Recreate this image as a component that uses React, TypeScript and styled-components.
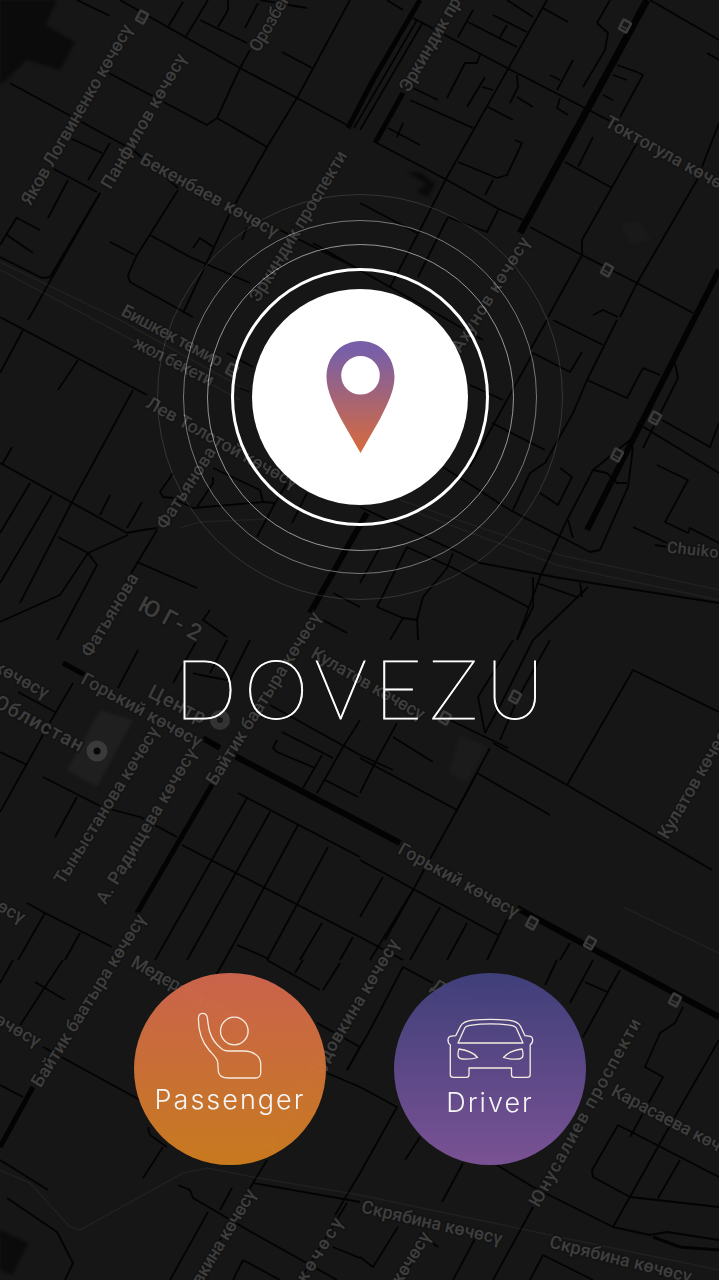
import React from "react";
import styled, { createGlobalStyle } from "styled-components";

const GlobalStyle = createGlobalStyle`
  html, body { margin: 0; padding: 0; background: #161616; }
  * { box-sizing: border-box; }
`;

const Page = styled.main`
  display: grid;
  width: 719px;
  height: 1280px;
  overflow: hidden;
  background: #161616;
`;

const MapLayer = styled.svg`
  grid-area: 1 / 1;
  display: block;
  width: 719px;
  height: 1280px;
`;

const Road = styled.polyline<{ $w: number }>`
  fill: none;
  stroke: #030303;
  stroke-width: ${(p) => p.$w}px;
  stroke-linejoin: round;
`;

const FaintRoad = styled.polyline`
  fill: none;
  stroke: rgba(255, 255, 255, 0.045);
  stroke-width: 1.5px;
`;

const Block = styled.polygon<{ $c: string }>`
  fill: ${(p) => p.$c};
  filter: blur(1.5px);
`;

const Label = styled.text<{ $size: number }>`
  font-family: Roboto, "Liberation Sans", sans-serif;
  font-weight: 500;
  font-size: ${(p) => p.$size}px;
  fill: #3e3e3e;
  stroke: #131313;
  stroke-width: 3px;
  paint-order: stroke;
  dominant-baseline: central;
`;

const Content = styled.div`
  grid-area: 1 / 1;
  display: flex;
  flex-direction: column;
  align-items: center;
  padding: 194px 0 0 1px;
`;

const Ring = styled.div<{ $size: number; $line: string; $width: number }>`
  display: flex;
  align-items: center;
  justify-content: center;
  flex: none;
  width: ${(p) => p.$size}px;
  height: ${(p) => p.$size}px;
  border-radius: 50%;
  border: ${(p) => p.$width}px solid ${(p) => p.$line};
`;

const Disc = styled.div`
  display: flex;
  align-items: flex-start;
  justify-content: center;
  flex: none;
  width: 216px;
  height: 216px;
  padding-top: 52px;
  border-radius: 50%;
  background: #fff;
`;

const Title = styled.h1`
  margin: 45px 0 0 6px;
  font-family: Lato, "Liberation Sans", sans-serif;
  font-weight: 100;
  font-size: 82px;
  line-height: 84px;
  letter-spacing: 7.3px;
  -webkit-text-stroke: 0.9px #fff;
  color: #fff;
`;

const Actions = styled.div`
  display: flex;
  gap: 68px;
  margin-top: 244px;
`;

const RoleButton = styled.button<{ $from: string; $to: string; $top: number }>`
  display: flex;
  flex-direction: column;
  align-items: center;
  width: 192px;
  height: 192px;
  padding: ${(p) => p.$top}px 0 0;
  border: 0;
  border-radius: 50%;
  opacity: 0.96;
  background: linear-gradient(180deg, ${(p) => p.$from}, ${(p) => p.$to});
`;

const RoleIcon = styled.svg`
  display: block;
  flex: none;
  overflow: visible;
  fill: none;
  stroke: #fff6ea;
  stroke-width: 1.3px;
  stroke-linejoin: round;
`;

const RoleName = styled.span<{ $gap: number }>`
  margin-top: ${(p) => p.$gap}px;
  font-family: Inter, "Liberation Sans", sans-serif;
  font-weight: 300;
  font-size: 27px;
  line-height: 32px;
  letter-spacing: 2px;
  color: #fff;
`;

const thin: string[] = [
  "10,83 133,150 178,188", "250,215 360,270 483,340", "637,423 719,473",
  "77,0 110,16", "120,0 187,38 240,68 297,98 347,125", "107,72 207,125 217,118 267,147",
  "217,118 240,68 250,50", "200,20 247,43", "185,38 208,0", "168,27 183,2", "218,27 228,10 228,0",
  "245,28 258,3", "260,0 307,8", "282,52 312,68", "350,0 297,98 267,147 230,213 183,313",
  "110,143 88,180", "68,137 102,153", "52,168 97,192", "68,180 48,218", "17,218 40,230",
  "7,235 33,253", "17,217 0,245", "0,257 42,278 50,277 100,193", "100,193 28,320",
  "178,190 137,255 128,275 130,282 193,317", "110,242 135,255", "150,235 190,257 250,283",
  "193,248 200,238 213,247", "242,240 247,227", "313,243 360,270",
  "387,0 403,10", "413,18 507,68 583,107 633,133", "507,0 533,17", "543,8 568,22",
  "547,0 447,177 420,230 390,287", "473,10 458,37", "468,22 517,47", "493,15 527,32",
  "507,25 500,37", "465,63 447,98", "465,63 477,63 480,55", "485,77 467,107", "482,87 493,90",
  "517,75 518,87 510,103", "517,97 533,107", "488,107 513,120", "573,60 557,90", "550,75 560,80",
  "560,98 557,108 568,115", "610,0 597,23 608,33 605,50 583,87", "617,65 637,72 643,75 620,117",
  "613,75 627,80", "603,95 613,100", "650,0 719,40", "707,53 719,60", "410,100 473,128",
  "413,88 438,100", "388,128 420,145", "403,123 397,137", "377,143 447,180 497,208 523,220",
  "530,227 582,255 637,283 693,313", "593,137 578,167", "565,162 612,188",
  "637,143 582,240 582,255 548,317", "719,123 697,180 637,283 620,317",
  "458,162 497,178 507,175 522,143 515,140", "493,180 485,195", "448,217 487,232 498,210",
  "448,217 418,277", "593,315 603,310 618,317", "360,203 417,233",
  "423,22 360,130", "417,20 354,128", "0,317 147,395", "23,330 0,373", "78,360 58,390",
  "133,390 72,502", "0,463 127,533 143,530 157,528", "12,447 2,465", "30,483 0,533",
  "52,495 0,583", "72,502 20,603", "110,495 100,515", "142,502 127,528", "58,537 88,553",
  "128,535 88,553 60,595 0,622", "88,553 97,565 57,640", "157,530 133,570 112,607",
  "137,562 197,588", "210,610 203,620 227,637", "173,473 160,492 163,497 173,498 193,508",
  "193,508 263,502 260,490 213,468", "213,477 213,483 197,507", "263,502 275,503 257,537",
  "307,493 292,523", "287,483 275,503", "333,593 360,607", "323,620 347,633", "227,353 253,367",
  "240,388 250,392", "553,320 603,345", "547,320 530,350", "617,320 587,380 573,413 545,463 530,473 513,510",
  "582,352 570,372 533,353 470,467", "587,380 627,398 643,368 660,375", "470,385 503,400",
  "492,423 545,450", "540,493 558,505 572,477 560,468", "675,363 678,378 643,448",
  "630,440 593,470 567,520 540,577 517,640", "633,447 628,487 600,550 590,552 510,510 443,467",
  "593,470 607,473 617,483 627,483", "568,520 573,538",
  "657,465 688,480 665,522 688,533 690,528 719,543", "633,527 667,543", "655,545 667,547",
  "662,420 710,447 719,423", "360,507 460,553 480,563 560,578 719,603",
  "407,547 453,568 530,608", "453,553 447,568 423,597 417,620 403,618 390,640",
  "377,607 403,618", "377,607 407,547", "417,617 418,640", "380,547 360,583",
  "533,577 533,607 517,640", "588,587 533,640", "537,583 577,597", "580,583 582,597",
  "18,692 55,712", "138,650 118,688", "73,683 53,717 0,812", "0,752 27,765",
  "43,777 102,807 140,817 177,837", "77,797 55,837", "182,845 360,937 403,960",
  "27,903 45,913 112,947", "45,913 18,960", "80,933 65,960", "238,793 360,857",
  "247,798 155,960", "270,812 187,960", "298,825 233,945 205,995", "328,847 267,960", "322,923 300,960",
  "353,937 340,960", "237,945 267,958", "277,740 273,748 277,752 315,768", "282,732 333,758",
  "270,705 360,755 393,770", "322,755 303,788", "343,747 317,793", "325,780 358,797",
  "360,720 343,747", "193,673 200,675 227,680", "197,640 173,683", "227,640 210,673",
  "250,640 230,680", "360,758 457,810 477,773 550,815", "393,737 433,762", "397,723 373,767 360,793",
  "490,748 457,810 413,890 385,940", "450,720 508,748", "493,743 567,785 712,870",
  "567,785 633,670 719,712", "478,697 485,733", "478,697 513,640", "533,640 503,700 485,733",
  "550,640 517,700 500,740", "360,860 498,935", "383,877 360,917", "413,890 370,960",
  "440,907 410,960", "467,923 447,960", "508,917 487,960", "570,943 560,960",
  "13,960 0,983", "35,982 65,1000", "63,960 43,990 17,1030", "0,1085 23,1097", "43,1047 140,1100",
  "148,1127 150,1135 167,1147", "163,1147 143,1178", "0,1160 48,1190",
  "7,1198 57,1232 73,1263 65,1280", "178,1185 190,1190 193,1198 253,1233 337,1280",
  "208,1212 170,1280", "232,1188 220,1210", "253,1183 360,1202", "267,1160 253,1183 220,1240",
  "347,1203 300,1280", "333,1247 360,1258", "243,1260 233,1280", "243,1260 280,1280",
  "267,960 320,990", "295,973 303,960", "323,990 340,963", "317,1023 360,1047", "327,1073 360,1087",
  "347,1070 360,1047", "403,967 433,983", "403,967 370,1030 347,1070", "360,1087 397,1107 360,1173 335,1215",
  "420,1137 405,1160", "463,1163 442,1202", "497,1165 533,1187 613,1227 650,1235",
  "593,960 570,1003", "620,970 583,1037", "585,982 607,992", "557,960 545,985",
  "683,1007 675,1023 660,1033 645,1067 663,1077 630,1137", "719,1040 677,1113 613,1227",
  "618,1125 592,1170 593,1177 630,1197 719,1207", "618,1125 719,1177", "680,1160 658,1198",
  "650,1235 667,1232 719,1240", "533,1207 493,1280", "420,1233 438,1247", "427,1233 403,1280",
  "478,1233 453,1280", "543,1255 530,1280", "543,1255 593,1280", "360,1257 373,1267 398,1227",
];

const thick: [string, number][] = [
  ["420,0 373,80 348,128", 5], ["403,93 375,143", 5], ["367,513 310,613", 6],
  ["213,783 137,913", 5], ["33,1087 0,1147", 5], ["647,0 520,233", 7], ["719,270 587,530", 6],
  ["63,663 85,675", 5], ["203,738 220,748", 6], ["233,755 400,843", 6],
  ["517,908 719,1017", 6], ["653,1237 680,1247 719,1250", 3],
];

const faint: string[] = [
  "0,262 120,320 250,392", "0,270 110,328 240,400", "400,500 560,555 719,590", "410,510 560,566 719,600",
  "180,528 200,522 265,519", "0,1170 30,1183 70,1227 80,1230 183,1173 207,1168 253,1177 360,1195 550,1235 719,1270",
  "623,907 719,953",
];

const blocks: [string, string][] = [
  ["0,0 57,0 45,25 75,42 60,70 27,60 0,85", "#0b0b0b"],
  ["100,710 133,720 97,787 67,770", "#1f1f1f"],
  ["460,735 487,747 467,783 448,773", "#1b1b1b"],
  ["620,222 640,222 652,240 630,245", "#191919"],
  ["0,1230 28,1243 12,1275 0,1270", "#0b0b0b"],
  ["407,172 420,172 435,184 428,197 417,192 426,184", "#0a0a0a"],
];

type Street = { t: string; x: number; y: number; a: number; l: number; s?: number };
const streets: Street[] = [
  { t: "Яков Логвиненко көчөсү", x: 25, y: 203, a: -60, l: 205 },
  { t: "Панфилов көчөсү", x: 105, y: 187, a: -60, l: 153 },
  { t: "Бекенбаев көчөсү", x: 142, y: 157, a: 29, l: 155 },
  { t: "Орозбеков", x: 253, y: 50, a: -60, l: 84 },
  { t: "Эркиндик проспекти", x: 253, y: 300, a: -59, l: 173 },
  { t: "Эркиндик проспекти", x: 403, y: 90, a: -60, l: 173 },
  { t: "Токтогула көчөсү", x: 607, y: 120, a: 29, l: 150 },
  { t: "Бишкек темир", x: 123, y: 309, a: 28, l: 112 },
  { t: "жол бекети", x: 135, y: 341, a: 27, l: 88 },
  { t: "Лев Толстой көчөсү", x: 148, y: 401, a: 29, l: 170 },
  { t: "Фатьянова", x: 160, y: 527, a: -57, l: 94 },
  { t: "Фатьянова", x: 85, y: 655, a: -59, l: 94 },
  { t: "ЮГ-2", x: 140, y: 603, a: 28, l: 68, s: 23 },
  { t: "Горький көчөсү", x: -70, y: 628, a: 29, l: 135 },
  { t: "Горький көчөсү", x: 83, y: 677, a: 29, l: 135 },
  { t: "Центр", x: 150, y: 690, a: 27, l: 62, s: 20 },
  { t: "Кулатов көчөсү", x: 313, y: 651, a: 30, l: 128 },
  { t: "Байтик баатыра көчөсү", x: 210, y: 783, a: -58, l: 200 },
  { t: "Облистан", x: -4, y: 700, a: 28, l: 98, s: 20 },
  { t: "Тыныстанова көчөсү", x: 58, y: 882, a: -58, l: 182 },
  { t: "А. Радищева көчөсү", x: 100, y: 902, a: -59, l: 178 },
  { t: "Кулатов көчөсү", x: 662, y: 837, a: -60, l: 130 },
  { t: "Горький көчөсү", x: 400, y: 847, a: 29, l: 135 },
  { t: "Байтик баатыра көчөсү", x: 35, y: 1085, a: -58, l: 200 },
  { t: "Медерова көчөсү", x: 133, y: 960, a: 29, l: 140 },
  { t: "көчөсү", x: -28, y: 889, a: 29, l: 60 },
  { t: "көчөсү", x: -12, y: 1012, a: 30, l: 60 },
  { t: "Жукеева-Пудовкина көчөсү", x: 268, y: 1150, a: -59, l: 245 },
  { t: "Жукеева-Пудовкина көчөсү", x: 135, y: 1383, a: -59, l: 225 },
  { t: "көчөсү", x: 300, y: 1280, a: -58, l: 72 },
  { t: "Юнусалиев проспекти", x: 533, y: 1205, a: -61, l: 212 },
  { t: "Карасаева көчөсү", x: 613, y: 1089, a: 28, l: 150 },
  { t: "Скрябина көчөсү", x: 362, y: 1206, a: 13, l: 144 },
  { t: "Скрябина көчөсү", x: 550, y: 1241, a: 14, l: 146 },
  { t: "Дорогу", x: 433, y: 983, a: 30, l: 76 },
  { t: "көчөсү", x: 395, y: 1282, a: -58, l: 58 },
  { t: "Chuikov", x: 667, y: 547, a: 6, l: 60, s: 16 },
  { t: "Ахунов көчөсү", x: 455, y: 350, a: -58, l: 132 },
];

const stops: [number, number][] = [
  [142, 17], [625, 26], [607, 270], [232, 370], [655, 418], [617, 455], [515, 697],
  [445, 718], [532, 923], [590, 943], [675, 1000],
];

function CityMap() {
  return (
    <MapLayer viewBox="0 0 719 1280" aria-hidden="true">
      {blocks.map(([p, c]) => <Block key={p} points={p} $c={c} />)}
      {thin.map((p) => <Road key={p} points={p} $w={1.8} />)}
      {thick.map(([p, w]) => <Road key={p} points={p} $w={w} />)}
      {faint.map((p) => <FaintRoad key={p} points={p} />)}
      <circle cx="97" cy="751" r="10.5" fill="#3a3a3a" />
      <circle cx="97" cy="751" r="3.5" fill="#080808" />
      <circle cx="220" cy="720" r="10" fill="#333" />
      <circle cx="220" cy="720" r="3" fill="#161616" />
      {streets.map((s) => (
        <Label
          key={s.t + s.x}
          $size={s.s ?? 18}
          x={s.x}
          y={s.y}
          textLength={s.l}
          lengthAdjust="spacing"
          transform={`rotate(${s.a} ${s.x} ${s.y})`}
        >
          {s.t}
        </Label>
      ))}
      {stops.map(([x, y]) => (
        <g key={x} transform={`translate(${x} ${y}) rotate(28)`}>
          <rect x="-5.5" y="-6.5" width="11" height="13" rx="2" fill="#3c3c3c" />
          <rect x="-3" y="-4" width="6" height="5" fill="#161616" />
          <rect x="-3" y="2.5" width="6" height="1.5" fill="#161616" />
        </g>
      ))}
    </MapLayer>
  );
}

function Pin() {
  return (
    <svg width="69" height="112" viewBox="0 0 69 112" aria-hidden="true">
      <defs>
        <linearGradient id="pinFill" x1="0" y1="0" x2="0" y2="1">
          <stop offset="0.08" stopColor="#785fa8" />
          <stop offset="1" stopColor="#d96a3c" />
        </linearGradient>
      </defs>
      <path
        fill="url(#pinFill)"
        fillRule="evenodd"
        d="M34.5 0C53.5 0 68.5 15 68.5 36C68.5 50 61 64 54 78L34.5 112L15 78C8 64 .5 50 .5 36C.5 15 15.5 0 34.5 0ZM34.5 15A19.3 19.3 0 1 0 34.5 53.6A19.3 19.3 0 1 0 34.5 15Z"
      />
    </svg>
  );
}

function PassengerIcon() {
  return (
    <RoleIcon width="64" height="66" viewBox="0 0 64 66" aria-hidden="true">
      <path d="M.4 6C.4 2 2 .3 4.6.3C7.6.3 9 2 9.4 5C10 10 10.400 15 12 19.500C14 26 18.500 32 24.500 36.500C26.500 37.800 28 38 31 38L46 38C55 38 62.700 43 62.700 51L62.700 60C62.700 63 60.500 65 57.500 65L31 65C24 65 20.500 62.500 20.300 58L19.700 49C19 45 15.500 42 11 37C5 30 .4 20 .4 6Z" />
      <circle cx="36.300" cy="18" r="13.800" />
    </RoleIcon>
  );
}

function CarIcon() {
  return (
    <RoleIcon width="85" height="59" viewBox="0 0 85 59" aria-hidden="true">
      <path d="M7.700 16.700L2 17.300C.5 17.800 0 19 0 20.700C0 23.500 1 25 2.300 25.700L2.300 55.700C2.300 57.500 3.500 58.300 5.700 58.300L18.300 58.300C20 58.300 21 57.500 21 55.700L21 49L63.500 49L63.500 55.700C63.500 57.500 64.500 58.300 66.200 58.300L79 58.300C81 58.300 82.200 57.500 82.200 55.700L82.200 25.700C83.500 25 84.700 23.500 84.700 20.700C84.700 19 84 17.800 82.700 17.300L77 16.700L72.500 7.300C70.500 3.500 66 1.800 60 1.200C50 .2 35 .2 25 1.200C19 1.800 14.500 3.500 12.500 7.300Z" />
      <path d="M10 24L16.500 9.500C17.300 7.500 19 6.800 22 6.300C34 4.700 51 4.700 63 6.300C66 6.800 67.700 7.500 68.500 9.500L75 24Z" />
      <path d="M11 30C18 31 26 34 29.500 38.500C25 40 19 40.300 14.500 40C11 39.800 10 38 10 35.500C10 33 10.300 31.500 11 30Z" />
      <path d="M74 30C67 31 59 34 55.500 38.500C60 40 66 40.300 70.500 40C74 39.800 75 38 75 35.500C75 33 74.700 31.500 74 30Z" />
    </RoleIcon>
  );
}

export default function App() {
  return (
    <Page>
      <GlobalStyle />
      <CityMap />
      <Content>
        <Ring $size={406} $width={1} $line="rgba(255,255,255,0.13)">
          <Ring $size={354} $width={1} $line="rgba(255,255,255,0.42)">
            <Ring $size={307} $width={1} $line="rgba(255,255,255,0.55)">
              <Ring $size={258} $width={3} $line="#fff">
                <Disc>
                  <Pin />
                </Disc>
              </Ring>
            </Ring>
          </Ring>
        </Ring>
        <Title>DOVEZU</Title>
        <Actions>
          <RoleButton type="button" $from="#d2674f" $to="#cf7e1f" $top={40}>
            <PassengerIcon />
            <RoleName $gap={5}>Passenger</RoleName>
          </RoleButton>
          <RoleButton type="button" $from="#41417e" $to="#7e5599" $top={46}>
            <CarIcon />
            <RoleName $gap={9}>Driver</RoleName>
          </RoleButton>
        </Actions>
      </Content>
    </Page>
  );
}
